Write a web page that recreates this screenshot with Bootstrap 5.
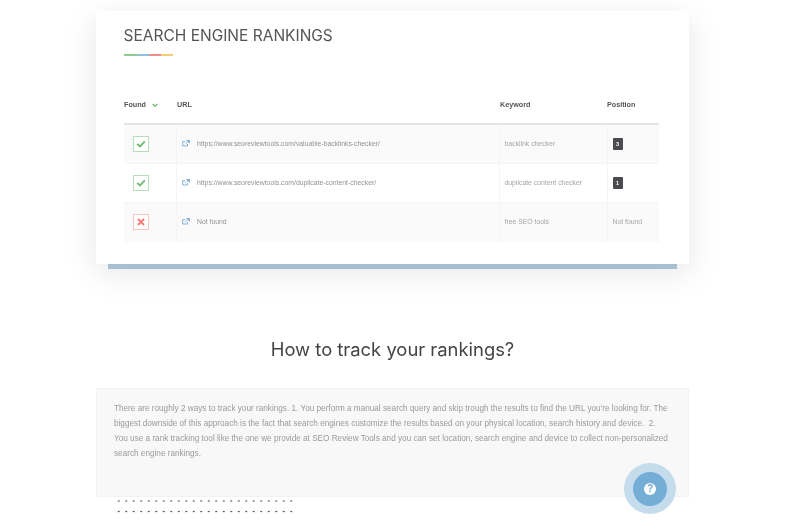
<!DOCTYPE html>
<html lang="en">
<head>
<meta charset="utf-8">
<title>Search engine rankings</title>
<link href="https://cdn.jsdelivr.net/npm/bootstrap@5.3.0/dist/css/bootstrap.min.css" rel="stylesheet">
<style>
html,body{height:530px;overflow:hidden;background:#fff}
body{font-family:"Liberation Sans",Arial,sans-serif;color:#999}
.page-wrap{width:593px;margin-left:96px;padding-top:11px;position:relative;filter:blur(.35px)}
.rank-card{background:#fff;height:253px;padding:16px 30px 0 28px;box-shadow:0 8px 30px rgba(0,0,0,.1)}
.rank-title{font-family:Inter,sans-serif;font-weight:400;font-size:15.5px;line-height:18px;color:#555;margin:0 0 0 -.5px}
.rainbow{width:49px;height:1.5px;margin:9px 0 0 -.5px;background:linear-gradient(90deg,#8fcb8f 0 28%,#8fc1e3 28% 50%,#f08c8c 50% 75%,#f5cd79 75%)}
.rank-table{margin:0;margin-top:37px;width:535px;table-layout:fixed;font-size:6.85px;border-collapse:collapse}
.rank-table th{height:31px;padding:0 0 4px 1px;font-size:7.2px;font-weight:700;color:#555;border-bottom:2px solid #e4e4e4;vertical-align:middle}
.rank-table th:first-child,.rank-table th:last-child{padding-left:0}
.rank-table td{height:39px;padding:0 5px;color:#a5a5a5;vertical-align:middle;border-right:1px solid #f4f4f4;border-bottom:1px solid #f5f5f5;background:#fff}
.rank-table tbody tr:first-child td{height:40px}
.rank-table tr:nth-child(odd) td{background:#fafafa}
.rank-table tbody tr:last-child td{border-bottom:0}
.rank-table td:last-child{border-right:0}
.rank-table td:first-child{padding:0 0 0 9px}
.rank-table td.url-cell{color:#929292}
.status-box{width:16px;height:16px;display:flex;align-items:center;justify-content:center;border:1px solid #b7deb9;background:#fff}
.status-box.miss{border-color:#f9c4c4}
.ext-icon{margin-right:7.5px;vertical-align:-1px}
.pos-tag{display:inline-block;width:10px;height:12px;line-height:12px;text-align:center;background:#4a4a4f;color:#fff;font-size:5.5px;font-weight:700;border-radius:1px}
.under-bar{height:5px;margin:0 12px;background:#a8bed2}
.how-title{font-family:Inter,sans-serif;font-weight:400;font-size:18.4px;line-height:24px;color:#444;text-align:center;margin:68px 0 27px}
.how-panel{height:109px;background:#f8f8f8;border:1px solid #f3f3f3;padding:12px 17px;font-size:8.2px;line-height:15px;color:#9a9a9a}
.how-panel p{margin:0}
.dots{width:178px;height:16px;margin:0 0 0 18.5px;background-image:radial-gradient(circle,#444 0.7px,transparent 1.1px);background-size:7.5px 10.6px;background-position:0 -1.3px}
.help-fab{position:absolute;left:528px;top:463px;width:52px;height:51px;border-radius:50%;background:#c5dcec;display:flex;align-items:center;justify-content:center}
.help-core{width:34px;height:34px;border-radius:50%;background:#74add6;display:flex;align-items:center;justify-content:center}
.help-glyph{width:12px;height:12px;border-radius:50%;background:#fff;color:#74add6;font-size:10px;font-weight:700;line-height:12px;text-align:center}
</style>
</head>
<body>
<div class="page-wrap">
  <section class="rank-card">
    <h2 class="rank-title">SEARCH ENGINE RANKINGS</h2>
    <div class="rainbow"></div>
    <table class="table rank-table">
      <colgroup><col style="width:52px"><col style="width:323px"><col style="width:108px"><col style="width:52px"></colgroup>
      <thead>
        <tr>
          <th>Found <svg class="ms-1" width="6" height="5" viewBox="0 0 6 5"><path d="M.7 1l2.3 2.4L5.3 1" fill="none" stroke="#6cb56f" stroke-width="1.2"/></svg></th>
          <th>URL</th><th>Keyword</th><th>Position</th>
        </tr>
      </thead>
      <tbody>
        <tr>
          <td><span class="status-box"><svg width="10" height="8" viewBox="0 0 10 8"><path d="M1.2 4l2.8 2.4 4.8-5" fill="none" stroke="#74bb78" stroke-width="2"/></svg></span></td>
          <td class="url-cell"><svg class="ext-icon" width="8" height="7" viewBox="0 0 8 7"><path d="M5.5 4v2H.7V1.6h2.5" fill="none" stroke="#7aa9d0" stroke-width=".9"/><path d="M2.8 4.4L6 1.2M4.6.3H7.6V3.3z" fill="#7aa9d0" stroke="#7aa9d0" stroke-width=".7"/></svg>https://www.seoreviewtools.com/valuable-backlinks-checker/</td>
          <td>backlink checker</td>
          <td><span class="pos-tag">3</span></td>
        </tr>
        <tr>
          <td><span class="status-box"><svg width="10" height="8" viewBox="0 0 10 8"><path d="M1.2 4l2.8 2.4 4.8-5" fill="none" stroke="#74bb78" stroke-width="2"/></svg></span></td>
          <td class="url-cell"><svg class="ext-icon" width="8" height="7" viewBox="0 0 8 7"><path d="M5.5 4v2H.7V1.6h2.5" fill="none" stroke="#7aa9d0" stroke-width=".9"/><path d="M2.8 4.4L6 1.2M4.6.3H7.6V3.3z" fill="#7aa9d0" stroke="#7aa9d0" stroke-width=".7"/></svg>https://www.seoreviewtools.com/duplicate-content-checker/</td>
          <td>duplicate content checker</td>
          <td><span class="pos-tag">1</span></td>
        </tr>
        <tr>
          <td><span class="status-box miss"><svg width="8" height="8" viewBox="0 0 8 8"><path d="M1 1l6 6M7 1L1 7" fill="none" stroke="#f47c7c" stroke-width="2"/></svg></span></td>
          <td class="url-cell"><svg class="ext-icon" width="8" height="7" viewBox="0 0 8 7"><path d="M5.5 4v2H.7V1.6h2.5" fill="none" stroke="#7aa9d0" stroke-width=".9"/><path d="M2.8 4.4L6 1.2M4.6.3H7.6V3.3z" fill="#7aa9d0" stroke="#7aa9d0" stroke-width=".7"/></svg>Not found</td>
          <td>free SEO tools</td>
          <td>Not found</td>
        </tr>
      </tbody>
    </table>
  </section>
  <div class="under-bar"></div>
  <h2 class="how-title">How to track your rankings?</h2>
  <div class="how-panel">
    <p>There are roughly 2 ways to track your rankings. 1. You perform a manual search query and skip trough the results to find the URL you're looking for. The biggest downside of this approach is the fact that search engines customize the results based on your physical location, search history and device. &nbsp;2. You use a rank tracking tool like the one we provide at SEO Review Tools and you can set location, search engine and device to collect non-personalized search engine rankings.</p>
  </div>
  <div class="dots"></div>
  <div class="help-fab"><div class="help-core"><div class="help-glyph">?</div></div></div>
</div>
</body>
</html>
